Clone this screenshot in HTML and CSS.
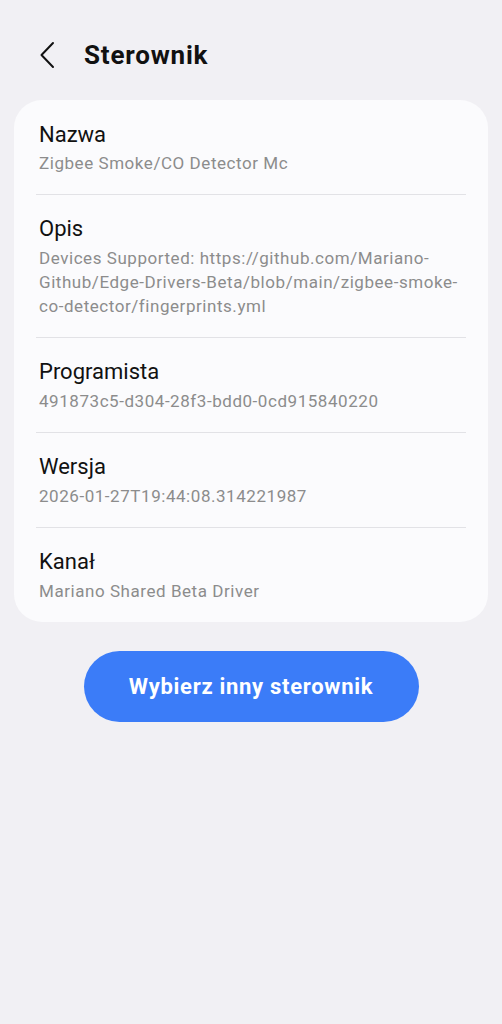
FILE: index.html
```html
<!DOCTYPE html>
<html lang="pl">
  <head>
    <meta charset="UTF-8" />
    <meta name="viewport" content="width=device-width, initial-scale=1.0" />
    <title>Sterownik</title>
    <link rel="stylesheet" href="styles.css">
  </head>
  <body>
    <div class="header">
      <button class="back-btn" type="button" aria-label="Wstecz">
        <svg width="16" height="28" viewBox="0 0 16 28">
          <path d="M13 2 L1.5 14 L13 26" fill="none" stroke="#111" stroke-width="2" stroke-linecap="round" stroke-linejoin="round" />
        </svg>
      </button>
      <h1>Sterownik</h1>
    </div>

    <div class="card">
      <div class="item">
        <div class="item-title">Nazwa</div>
        <div class="item-value">Zigbee Smoke/CO Detector Mc</div>
      </div>
      <div class="item">
        <div class="item-title">Opis</div>
        <div class="item-value">Devices Supported: https://github.com/Mariano-Github/Edge-Drivers-Beta/blob/main/zigbee-smoke-co-detector/fingerprints.yml</div>
      </div>
      <div class="item">
        <div class="item-title">Programista</div>
        <div class="item-value">491873c5-d304-28f3-bdd0-0cd915840220</div>
      </div>
      <div class="item">
        <div class="item-title">Wersja</div>
        <div class="item-value">2026-01-27T19:44:08.314221987</div>
      </div>
      <div class="item">
        <div class="item-title">Kanał</div>
        <div class="item-value">Mariano Shared Beta Driver</div>
      </div>
    </div>

    <div class="actions">
      <button class="primary-btn" type="button">Wybierz inny sterownik</button>
    </div>
  </body>
</html>
```

FILE: styles.css
```css
body {
  font-family: Roboto, "Noto Sans", sans-serif;
  background-color: #f1f0f4;
  margin: 0;
  color: #111;
}

.header {
  display: flex;
  align-items: center;
  height: 62px;
  padding: 24px 0 14px 40px;
}

.back-btn {
  background: none;
  border: none;
  padding: 0;
  width: 16px;
  height: 28px;
  cursor: pointer;
}

.header h1 {
  margin: 0 0 0 28px;
  font-size: 26px;
  font-weight: 700;
  letter-spacing: 0.8px;
  color: #111;
}

.card {
  margin: 0 14px;
  background-color: #fbfbfd;
  border-radius: 28px;
}

.item {
  padding: 21px 25px 19px 25px;
}

.item + .item {
  border-top: 1px solid #e2e2e6;
  margin: 0 22px;
  padding-top: 20px;
  padding-left: 3px;
  padding-right: 3px;
}

.item-title {
  font-size: 22px;
  line-height: 28px;
  color: #111;
}

.item-value {
  margin-top: 2px;
  font-size: 17px;
  line-height: 24px;
  letter-spacing: 0.55px;
  color: #8c8c8c;
  overflow-wrap: break-word;
}

.item + .item .item-value {
  margin-top: 3px;
}

.actions {
  display: flex;
  justify-content: center;
  padding-top: 29px;
}

.primary-btn {
  width: 335px;
  height: 71px;
  border: none;
  border-radius: 36px;
  background-color: #3b7cf8;
  color: #fff;
  font-family: Roboto, "Noto Sans", sans-serif;
  font-size: 22px;
  font-weight: 700;
  letter-spacing: 0.7px;
  cursor: pointer;
}
```
